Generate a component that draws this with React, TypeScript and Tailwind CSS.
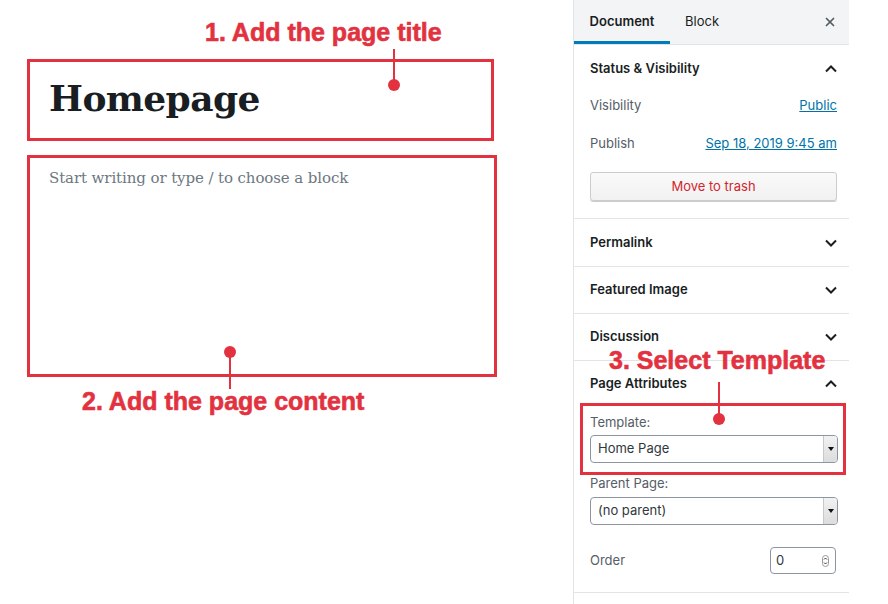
import { X } from 'lucide-react'

const RED = 'text-[#e3323f] [-webkit-text-stroke:0.6px_#e3323f]'

function Chevron({ up }: { up?: boolean }) {
	return (
		<svg width="12" height="8" viewBox="0 0 12 8" className={up ? 'rotate-180' : ''}>
			<path d="M1 1.5 L6 6.5 L11 1.5" fill="none" stroke="#191e23" strokeWidth="2" />
		</svg>
	)
}

function SelectBox({ value }: { value: string }) {
	return (
		<div className="flex h-[28px] w-[248px] items-stretch overflow-hidden rounded-[4px] border border-[#8d96a0] bg-white">
			<div className="flex flex-1 items-center pl-[7px] text-[13px] text-[#32373c]">{value}</div>
			<div className="flex w-[14px] items-center justify-center border-l border-[#c8c8c8] bg-gradient-to-b from-[#f2f2f2] to-[#dcdcdc]">
				<svg width="6" height="4" viewBox="0 0 6 4">
					<path d="M0 0 H6 L3 4 Z" fill="#111" />
				</svg>
			</div>
		</div>
	)
}

function CollapsedPanel({ title, tall }: { title: string; tall?: boolean }) {
	return (
		<div
			className={`flex items-center justify-between border-b border-[#e2e4e7] pl-[16px] pr-[12px] ${tall ? 'h-[48px]' : 'h-[47px]'}`}
		>
			<span className="text-[13px] font-semibold text-[#191e23]">{title}</span>
			<Chevron />
		</div>
	)
}

export default function App() {
	return (
		<div
			className="relative flex h-[604px] w-[888px] overflow-hidden bg-white"
			style={{ fontFamily: 'Inter, "Noto Sans", sans-serif' }}
		>
			{/* editor */}
			<main className="w-[573px] shrink-0 pl-[27px] pt-[59px]">
				<div className="h-[82px] w-[467px] border-[3px] border-[#e3323f] pl-[19px] pt-[18px]">
					<h1
						className="text-[36px] font-bold leading-none tracking-[-0.6px] text-[#191e23]"
						style={{ fontFamily: '"DejaVu Serif", serif' }}
					>
						Homepage
					</h1>
				</div>
				<div className="mt-[14px] h-[222px] w-[470px] border-[3px] border-[#e3323f] pl-[19px] pt-[13px]">
					<p
						className="text-[15px] leading-none tracking-[-0.1px] text-[#6c7781]"
						style={{ fontFamily: '"DejaVu Serif", serif' }}
					>
						Start writing or type / to choose a block
					</p>
				</div>
			</main>

			{/* sidebar */}
			<aside className="flex w-[276px] shrink-0 flex-col border-l border-[#e2e4e7]">
				<div className="flex h-[45px] items-stretch border-b border-[#e2e4e7] bg-[#f3f4f5]">
					<div className="flex w-[96px] items-center justify-center border-b-[3px] border-[#007cba] pt-[2px] text-[13px] font-semibold text-[#191e23]">
						Document
					</div>
					<div className="flex items-center px-[15px] text-[13px] text-[#191e23]">Block</div>
					<div className="ml-auto flex items-center pr-[12px]">
						<X size={14} strokeWidth={3} className="text-[#555d66]" />
					</div>
				</div>

				<div className="border-b border-[#e2e4e7] pb-[17px] pl-[16px] pr-[12px]">
					<div className="flex h-[46px] items-center justify-between pt-[1px]">
						<span className="text-[13px] font-semibold text-[#191e23]">Status &amp; Visibility</span>
						<Chevron up />
					</div>
					<div className="flex h-[28px] items-center justify-between pt-[1px] text-[13px]">
						<span className="text-[#555d66]">Visibility</span>
						<span className="text-[#0073aa] underline">Public</span>
					</div>
					<div className="mt-[10px] flex h-[28px] items-center justify-between pt-[1px] text-[13px]">
						<span className="text-[#555d66]">Publish</span>
						<span className="text-[#0073aa] underline">Sep 18, 2019 9:45 am</span>
					</div>
					<button className="mt-[15px] flex h-[29px] w-full items-center justify-center rounded-[3px] border border-[#cccccc] bg-gradient-to-b from-[#fafafa] to-[#f1f1f1] text-[13px] text-[#d1262f] shadow-[0_1px_0_#cccccc]">
						Move to trash
					</button>
				</div>

				<CollapsedPanel title="Permalink" tall />
				<CollapsedPanel title="Featured Image" />
				<CollapsedPanel title="Discussion" />

				<div className="border-b border-[#e2e4e7] pb-[18px] pl-[16px] pr-[12px]">
					<div className="flex h-[46px] items-center justify-between">
						<span className="text-[13px] font-semibold text-[#191e23]">Page Attributes</span>
						<Chevron up />
					</div>
					<div className="mt-[7px] text-[13px] leading-[16px] text-[#555d66]">Template:</div>
					<div className="mt-[5px]">
						<SelectBox value="Home Page" />
					</div>
					<div className="mt-[12px] text-[13px] leading-[16px] text-[#555d66]">Parent Page:</div>
					<div className="mt-[6px]">
						<SelectBox value="(no parent)" />
					</div>
					<div className="mt-[22px] flex items-center justify-between">
						<span className="text-[13px] text-[#555d66]">Order</span>
						<div className="mr-[1px] flex h-[27px] w-[66px] items-center justify-between rounded-[4px] border border-[#8d96a0] pl-[5px] pr-[6px] text-[13px] text-[#32373c]">
							<span>0</span>
							<svg width="7" height="12" viewBox="0 0 7 12">
								<rect x="0.5" y="0.5" width="6" height="11" rx="3" fill="none" stroke="#999" />
								<path d="M2 4.5 L3.5 3 L5 4.5 M2 7.5 L3.5 9 L5 7.5" fill="none" stroke="#333" strokeWidth="1" />
							</svg>
						</div>
					</div>
				</div>
			</aside>

			{/* annotations */}
			<div
				className={`absolute left-[205px] top-[20px] text-[25px] font-bold leading-none ${RED}`}
				style={{ fontFamily: '"Liberation Sans", Arial, sans-serif' }}
			>
				1. Add the page title
			</div>
			<div className="absolute left-[393px] top-[49px] h-[36px] w-[2px] bg-[#e3323f]" />
			<div className="absolute left-[388px] top-[79px] h-[12px] w-[12px] rounded-full bg-[#e3323f]" />

			<div className="absolute left-[229px] top-[352px] h-[37px] w-[2px] bg-[#e3323f]" />
			<div className="absolute left-[224px] top-[346px] h-[12px] w-[12px] rounded-full bg-[#e3323f]" />
			<div
				className={`absolute left-[82px] top-[389px] text-[25px] font-bold leading-none ${RED}`}
				style={{ fontFamily: '"Liberation Sans", Arial, sans-serif' }}
			>
				2. Add the page content
			</div>

			<div
				className={`absolute left-[609px] top-[348px] text-[25px] font-bold leading-none ${RED}`}
				style={{ fontFamily: '"Liberation Sans", Arial, sans-serif' }}
			>
				3. Select Template
			</div>
			<div className="absolute left-[580px] top-[403px] h-[72px] w-[266px] border-[3px] border-[#e3323f]" />
			<div className="absolute left-[718px] top-[382px] h-[37px] w-[2px] bg-[#e3323f]" />
			<div className="absolute left-[713px] top-[413px] h-[12px] w-[12px] rounded-full bg-[#e3323f]" />
		</div>
	)
}
